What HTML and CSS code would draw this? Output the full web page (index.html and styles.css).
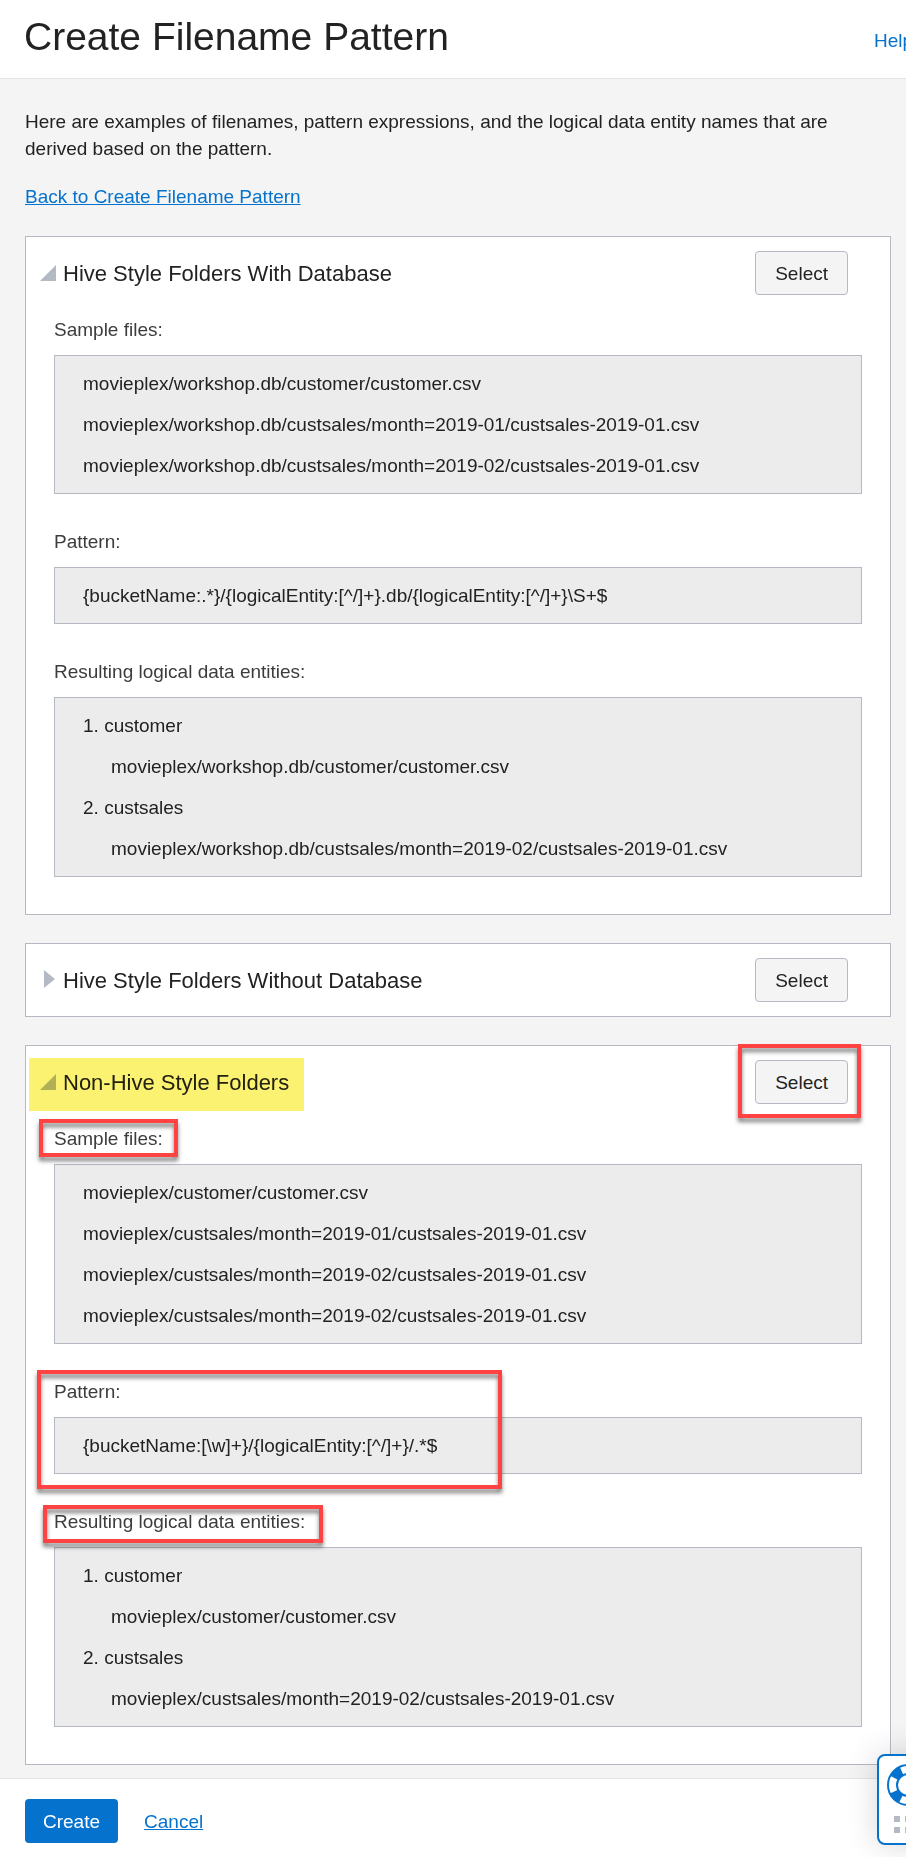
FILE: index.html
```html
<!DOCTYPE html>
<html lang="en">
<head>
<meta charset="utf-8">
<meta name="viewport" content="width=device-width, initial-scale=1">
<title>Create Filename Pattern</title>
<link rel="stylesheet" href="styles.css">
</head>
<body>
<div class="page">
  <header class="page-header">
    <h1 class="page-title">Create Filename Pattern</h1>
    <a class="help-link" href="#help">Help</a>
  </header>

  <main class="content">
    <p class="intro">Here are examples of filenames, pattern expressions, and the logical data entity names that are derived based on the pattern.</p>
    <p class="back"><a class="link" href="#back">Back to Create Filename Pattern</a></p>

    <div class="panels">
      <section class="panel">
        <div class="panel-head">
          <h2 class="panel-title"><button class="toggle" type="button" aria-expanded="true"><svg class="arrow" viewBox="0 0 16 16" aria-hidden="true"><path d="M16 0V16H0Z"/></svg>Hive Style Folders With Database</button></h2>
          <button class="button" type="button">Select</button>
        </div>
        <div class="panel-body">
          <div class="group">
            <h3 class="label">Sample files:</h3>
            <ul class="box">
              <li>movieplex/workshop.db/customer/customer.csv</li>
              <li>movieplex/workshop.db/custsales/month=2019-01/custsales-2019-01.csv</li>
              <li>movieplex/workshop.db/custsales/month=2019-02/custsales-2019-01.csv</li>
            </ul>
          </div>
          <div class="group">
            <h3 class="label">Pattern:</h3>
            <p class="box">{bucketName:.*}/{logicalEntity:[^/]+}.db/{logicalEntity:[^/]+}\S+$</p>
          </div>
          <div class="group">
            <h3 class="label">Resulting logical data entities:</h3>
            <ol class="box entities">
              <li>customer<p class="path">movieplex/workshop.db/customer/customer.csv</p></li>
              <li>custsales<p class="path">movieplex/workshop.db/custsales/month=2019-02/custsales-2019-01.csv</p></li>
            </ol>
          </div>
        </div>
      </section>

      <section class="panel">
        <div class="panel-head">
          <h2 class="panel-title"><button class="toggle" type="button" aria-expanded="false"><svg class="arrow" viewBox="0 0 16 16" aria-hidden="true"><path d="M4 -2L15 7L4 16Z"/></svg>Hive Style Folders Without Database</button></h2>
          <button class="button" type="button">Select</button>
        </div>
      </section>

      <section class="panel">
        <div class="panel-head">
          <h2 class="panel-title marked"><button class="toggle" type="button" aria-expanded="true"><svg class="arrow" viewBox="0 0 16 16" aria-hidden="true"><path d="M16 0V16H0Z"/></svg>Non-Hive Style Folders</button></h2>
          <div class="callout callout-select"><button class="button" type="button">Select</button></div>
        </div>
        <div class="panel-body">
          <div class="group">
            <h3 class="label callout callout-sample">Sample files:</h3>
            <ul class="box">
              <li>movieplex/customer/customer.csv</li>
              <li>movieplex/custsales/month=2019-01/custsales-2019-01.csv</li>
              <li>movieplex/custsales/month=2019-02/custsales-2019-01.csv</li>
              <li>movieplex/custsales/month=2019-02/custsales-2019-01.csv</li>
            </ul>
          </div>
          <div class="group callout callout-pattern">
            <h3 class="label">Pattern:</h3>
            <p class="box">{bucketName:[\w]+}/{logicalEntity:[^/]+}/.*$</p>
          </div>
          <div class="group">
            <h3 class="label callout callout-result">Resulting logical data entities:</h3>
            <ol class="box entities">
              <li>customer<p class="path">movieplex/customer/customer.csv</p></li>
              <li>custsales<p class="path">movieplex/custsales/month=2019-02/custsales-2019-01.csv</p></li>
            </ol>
          </div>
        </div>
      </section>
    </div>
  </main>

  <footer class="page-footer">
    <button class="button button-primary" type="button">Create</button>
    <a class="link" href="#cancel">Cancel</a>
  </footer>
</div>

<button class="support" type="button" aria-label="Support">
  <svg class="support-icon" viewBox="0 0 42 42" aria-hidden="true">
    <circle cx="21" cy="21" r="15.5" fill="none" stroke="#fff" stroke-width="9"/>
    <circle cx="21" cy="21" r="15.5" fill="none" stroke="#0572ce" stroke-width="9" stroke-dasharray="10.2 14.147" stroke-dashoffset="-7.074"/>
    <circle cx="21" cy="21" r="20" fill="none" stroke="#0572ce" stroke-width="2"/>
    <circle cx="21" cy="21" r="11" fill="none" stroke="#0572ce" stroke-width="2"/>
  </svg>
  <svg class="support-grip" viewBox="0 0 28 17" aria-hidden="true"><path d="M0 0h6v6h-6zM11 0h6v6h-6zM22 0h6v6h-6zM0 11h6v6h-6zM11 11h6v6h-6zM22 11h6v6h-6z"/></svg>
</button>
</body>
</html>
```
FILE: styles.css
```css
*,
*::after {
  box-sizing: border-box;
}

body {
  margin: 0;
  overflow-x: hidden;
  background: #f4f4f4;
  color: #222;
  font: 19px/27px "Liberation Sans", Arial, sans-serif;
}

h1, h2, h3, p, ul, ol {
  margin: 0;
  padding: 0;
  font-weight: normal;
}

button {
  font: inherit;
  color: inherit;
  cursor: pointer;
}

.page {
  display: flex;
  flex-direction: column;
  min-height: 100vh;
}

.page-header {
  display: flex;
  align-items: center;
  justify-content: space-between;
  padding: 14px 0 18px 24px;
  border-bottom: 1px solid #e4e4e4;
  background: #fff;
}

.page-title {
  font-size: 39px;
  line-height: 46px;
}

.help-link {
  margin-right: -7px;
  padding-top: 6px;
  color: #0572ce;
  text-decoration: none;
}

.link {
  color: #0572ce;
  text-decoration: underline;
}

.content {
  flex: 1;
  padding: 29px 15px 13px 25px;
}

.back {
  margin: 21px 0 26px;
}

.panels {
  display: grid;
  gap: 28px;
}

.panel {
  border: 1px solid #b4b9c2;
  background: #fff;
}

.panel-head {
  display: flex;
  align-items: center;
  justify-content: space-between;
  padding: 14px 42px 14px 14px;
}

.panel-title {
  font-size: 22px;
}

.toggle {
  display: flex;
  align-items: center;
  gap: 7px;
  padding: 0;
  border: 0;
  background: none;
}

.arrow {
  width: 16px;
  height: 16px;
  overflow: visible;
  fill: #b4bac4;
}

.button {
  display: block;
  height: 44px;
  padding: 0 19px;
  border: 1px solid #b4b9c2;
  border-radius: 4px;
  background: #f4f4f4;
}

.button-primary {
  padding: 0 18px;
  border: 0;
  background: #0572ce;
  color: #fff;
}

.panel-body {
  display: grid;
  gap: 34px;
  padding: 7px 28px 37px;
}

.label {
  width: fit-content;
  margin-bottom: 12px;
  color: #3c3c3c;
  font-size: 19px;
}

.box {
  padding: 7px 28px;
  border: 1px solid #b4b9c2;
  background: #ececec;
  line-height: 41px;
  list-style: none;
}

.entities {
  list-style: decimal inside;
}

.path {
  padding-left: 28px;
}

.page-footer {
  display: flex;
  align-items: center;
  gap: 26px;
  padding: 20px 25px 14px;
  border-top: 1px solid #e4e4e4;
  background: #fff;
}

/* Highlighter and outline marks drawn over the panel */
.marked,
.callout {
  position: relative;
}

.marked::after {
  content: "";
  position: absolute;
  inset: -11px -15px -15px -11px;
  background: #fcf271;
  mix-blend-mode: multiply;
  pointer-events: none;
}

.callout::after {
  content: "";
  position: absolute;
  border: 4px solid #ff4343;
  filter: drop-shadow(0 4px 2px rgba(0, 0, 0, 0.5));
  pointer-events: none;
}

.callout-select::after {
  inset: -16px -13px -14px -17px;
}

.callout-sample::after {
  inset: -6px -15px -5px -15px;
}

.callout-pattern::after {
  inset: -8px auto -15px -17px;
  width: 465px;
}

.callout-result::after {
  inset: -3px -18px -8px -11px;
}

.support {
  position: fixed;
  right: -33px;
  bottom: 12px;
  display: flex;
  flex-direction: column;
  align-items: center;
  gap: 10px;
  padding: 8px;
  height: 91px;
  width: 62px;
  border: 2px solid #0572ce;
  border-radius: 8px;
  background: #fff;
  box-shadow: 0 0 32px rgba(0, 0, 0, 0.16);
}

.support-icon {
  flex: none;
  width: 42px;
  height: 42px;
}

.support-grip {
  flex: none;
  width: 28px;
  height: 17px;
  fill: #b4bac4;
}
```
